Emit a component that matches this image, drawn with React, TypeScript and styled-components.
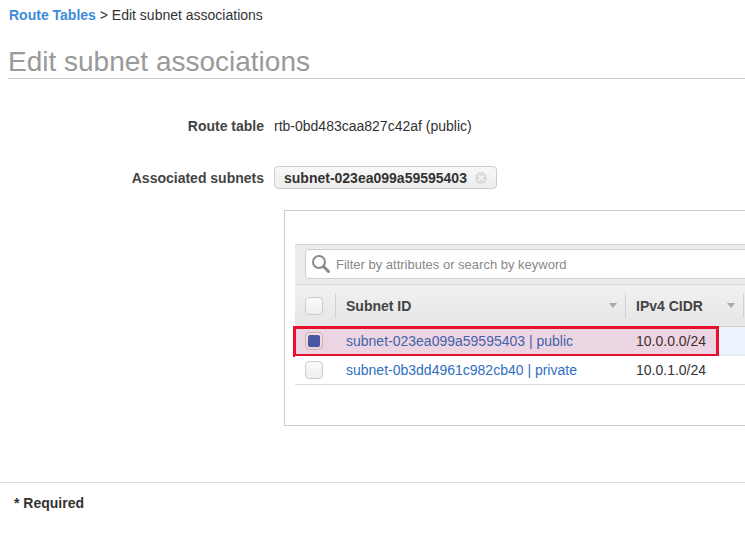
import React from "react";
import styled, { createGlobalStyle } from "styled-components";

const GlobalStyle = createGlobalStyle`
  html, body {
    margin: 0;
    padding: 0;
    background: #ffffff;
    overflow: hidden;
  }
  body {
    font-family: "Liberation Sans", Arial, sans-serif;
    font-size: 14px;
    color: #333333;
  }
`;

const Page = styled.div`
  width: 745px;
  height: 540px;
  overflow: hidden;
`;

const Breadcrumb = styled.div`
  padding: 7px 9px 0;
  line-height: 16px;
  font-size: 14px;
  color: #333;
`;

const CrumbLink = styled.a`
  color: #3d8bdb;
  font-weight: bold;
  text-decoration: none;
`;

const Title = styled.h1`
  margin: 23px 0 0 8px;
  font-size: 28px;
  line-height: 32px;
  font-weight: normal;
  color: #9a9a9a;
  border-bottom: 1px solid #cccccc;
`;

const Form = styled.div`
  display: grid;
  grid-template-columns: 264px 1fr;
  column-gap: 10px;
  align-items: center;
  margin-top: 37px;
`;

const Label = styled.div<{ $gap?: number }>`
  text-align: right;
  font-weight: bold;
  color: #444;
  line-height: 20px;
  margin-top: ${(p) => p.$gap ?? 0}px;
`;

const Value = styled.div<{ $gap?: number }>`
  line-height: 20px;
  margin-top: ${(p) => p.$gap ?? 0}px;
`;

const Token = styled.span`
  display: inline-flex;
  align-items: center;
  gap: 8px;
  height: 21px;
  padding: 0 9px 0 9px;
  border: 1px solid #cccccc;
  border-radius: 4px;
  background: linear-gradient(#f8f8f8, #ededed);
  font-weight: bold;
  color: #333;
`;

const TokenClose = styled.span`
  width: 12px;
  height: 12px;
  border-radius: 50%;
  background: #dcdcdc;
  display: inline-flex;
  align-items: center;
  justify-content: center;
`;

const Panel = styled.div`
  grid-column: 2;
  margin: 21px 0 0 10px;
  width: 600px;
  border: 1px solid #cccccc;
  padding: 33px 0 40px 10px;
`;

const Toolbar = styled.div`
  background: #ececec;
  border-top: 1px solid #d3d3d3;
  border-bottom: 1px solid #d6d6d6;
  padding: 4px 10px 5px;
`;

const Filter = styled.div`
  display: flex;
  align-items: center;
  gap: 5px;
  height: 28px;
  padding: 0 8px 0 5px;
  background: #ffffff;
  border: 1px solid #cfcfcf;
  border-radius: 4px;
  color: #888;
  font-size: 13px;
`;

const Grid = styled.div`
  display: grid;
  grid-template-columns: 40px 290px 118px 200px;
  align-items: center;
`;

const HeaderRow = styled(Grid)`
  height: 41px;
  background: linear-gradient(#f1f1f1, #e6e6e6);
  border-bottom: 1px solid #d0d0d0;
`;

const HeadCell = styled.div<{ $first?: boolean }>`
  position: relative;
  display: flex;
  align-items: center;
  justify-content: space-between;
  height: 100%;
  padding: 0 8px 0 ${(p) => (p.$first ? 10 : 11)}px;
  font-weight: bold;
  color: #444;
  &::before {
    content: "";
    display: ${(p) => (p.$first ? "none" : "block")};
    position: absolute;
    left: 0;
    top: 8px;
    bottom: 8px;
    border-left: 1px solid #cfcfcf;
  }
`;

const SortArrow = styled.span`
  width: 0;
  height: 0;
  border-left: 4px solid transparent;
  border-right: 4px solid transparent;
  border-top: 5px solid #a8a8a8;
`;

const Row = styled(Grid)<{ $selected?: boolean }>`
  position: relative;
  height: 28px;
  background: ${(p) => (p.$selected ? "#edf3fd" : "#ffffff")};
  border-bottom: 1px solid ${(p) => (p.$selected ? "#e4e9f2" : "#dddddd")};
`;

const Cell = styled.div<{ $pad?: number }>`
  padding-left: ${(p) => p.$pad ?? 11}px;
  white-space: nowrap;
`;

const Link = styled.a`
  color: #2f6fbf;
  text-decoration: none;
`;

const Check = styled.span<{ $on?: boolean }>`
  display: flex;
  align-items: center;
  justify-content: center;
  box-sizing: border-box;
  width: 18px;
  height: 18px;
  border: 1px solid #cccccc;
  border-radius: 4px;
  background: linear-gradient(#fbfbfb, #eeeeee);
  &::after {
    content: "";
    display: ${(p) => (p.$on ? "block" : "none")};
    width: 12px;
    height: 12px;
    border-radius: 2px;
    background: #3363b6;
  }
`;

const Highlight = styled.div`
  position: absolute;
  left: -2px;
  top: -1px;
  width: 426px;
  height: 31px;
  box-sizing: border-box;
  border: 3px solid #e8112d;
  background: rgba(220, 0, 30, 0.12);
  pointer-events: none;
`;

const Footer = styled.div`
  margin-top: 56px;
  border-top: 1px solid #dddddd;
  padding: 12px 14px;
  line-height: 16px;
  font-family: "Liberation Sans Narrow", "Liberation Sans", Arial, sans-serif;
  font-weight: bold;
  font-size: 14px;
  color: #333;
`;

const SearchIcon = () => (
  <svg width="20" height="20" viewBox="0 0 20 20">
    <circle cx="8" cy="8" r="6" fill="none" stroke="#8a8a8a" strokeWidth="2" />
    <line x1="12.5" y1="12.5" x2="17.5" y2="17.5" stroke="#8a8a8a" strokeWidth="3" strokeLinecap="round" />
  </svg>
);

const subnets = [
  { id: "subnet-023ea099a59595403 | public", cidr: "10.0.0.0/24", selected: true },
  { id: "subnet-0b3dd4961c982cb40 | private", cidr: "10.0.1.0/24", selected: false },
];

const App: React.FC = () => {
  return (
    <Page>
      <GlobalStyle />
      <Breadcrumb>
        <CrumbLink>Route Tables</CrumbLink> &gt; Edit subnet associations
      </Breadcrumb>
      <Title>Edit subnet associations</Title>

      <Form>
        <Label>Route table</Label>
        <Value>rtb-0bd483caa827c42af (public)</Value>

        <Label $gap={30}>Associated subnets</Label>
        <Value $gap={30}>
          <Token>
            subnet-023ea099a59595403
            <TokenClose>
              <svg width="6" height="6" viewBox="0 0 6 6">
                <path d="M1 1 L5 5 M5 1 L1 5" stroke="#fff" strokeWidth="1.4" strokeLinecap="round" />
              </svg>
            </TokenClose>
          </Token>
        </Value>

        <Panel>
          <Toolbar>
            <Filter>
              <SearchIcon />
              Filter by attributes or search by keyword
            </Filter>
          </Toolbar>
          <HeaderRow>
            <HeadCell $first>
              <Check />
            </HeadCell>
            <HeadCell>
              Subnet ID
              <SortArrow />
            </HeadCell>
            <HeadCell>
              IPv4 CIDR
              <SortArrow />
            </HeadCell>
            <HeadCell />
          </HeaderRow>
          {subnets.map((s) => (
            <Row key={s.id} $selected={s.selected}>
              <Cell $pad={10}>
                <Check $on={s.selected} />
              </Cell>
              <Cell>
                <Link>{s.id}</Link>
              </Cell>
              <Cell>{s.cidr}</Cell>
              <Cell />
              {s.selected && <Highlight />}
            </Row>
          ))}
        </Panel>
      </Form>

      <Footer>* Required</Footer>
    </Page>
  );
};

export default App;
